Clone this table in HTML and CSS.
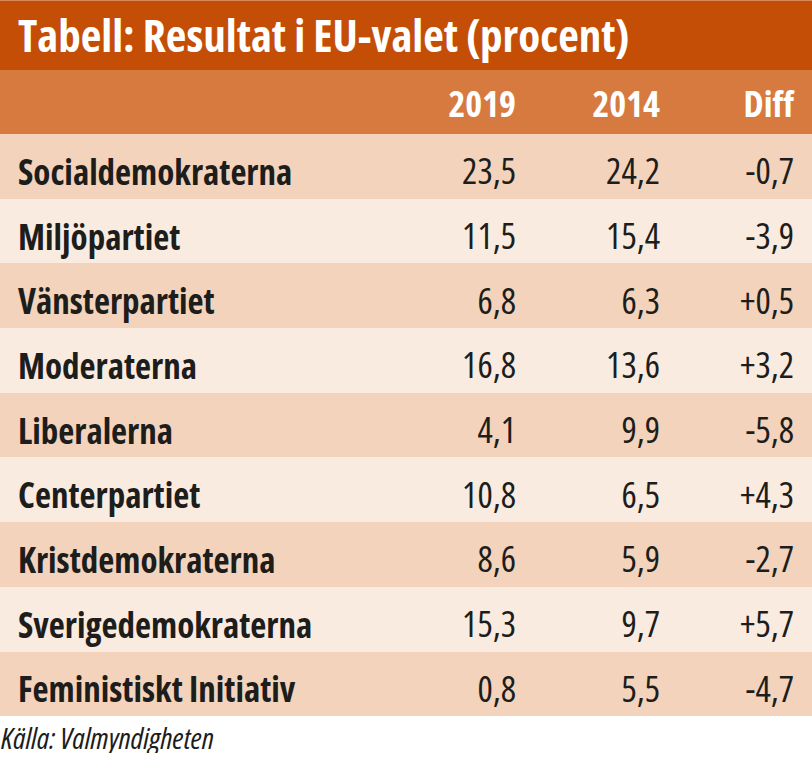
FILE: index.html
```html
<!DOCTYPE html>
<html lang="sv"><head><meta charset="utf-8"><title>Tabell: Resultat i EU-valet (procent)</title><link rel="stylesheet" href="styles.css"></head>
<body>
<div class="card">
  <h1 class="title">Tabell: Resultat i EU-valet (procent)</h1>
  <div class="row head">
    <span class="name"></span><span class="num">2019</span><span class="num">2014</span><span class="num">Diff</span>
  </div>
  <div class="row odd"><span class="name">Socialdemokraterna</span><span class="num">23,5</span><span class="num">24,2</span><span class="num">-0,7</span></div>
  <div class="row even"><span class="name">Miljöpartiet</span><span class="num">11,5</span><span class="num">15,4</span><span class="num">-3,9</span></div>
  <div class="row odd"><span class="name">Vänsterpartiet</span><span class="num">6,8</span><span class="num">6,3</span><span class="num">+0,5</span></div>
  <div class="row even"><span class="name">Moderaterna</span><span class="num">16,8</span><span class="num">13,6</span><span class="num">+3,2</span></div>
  <div class="row odd"><span class="name">Liberalerna</span><span class="num">4,1</span><span class="num">9,9</span><span class="num">-5,8</span></div>
  <div class="row even"><span class="name">Centerpartiet</span><span class="num">10,8</span><span class="num">6,5</span><span class="num">+4,3</span></div>
  <div class="row odd"><span class="name">Kristdemokraterna</span><span class="num">8,6</span><span class="num">5,9</span><span class="num">-2,7</span></div>
  <div class="row even"><span class="name">Sverigedemokraterna</span><span class="num">15,3</span><span class="num">9,7</span><span class="num">+5,7</span></div>
  <div class="row odd"><span class="name">Feministiskt Initiativ</span><span class="num">0,8</span><span class="num">5,5</span><span class="num">-4,7</span></div>
  <p class="source">Källa: Valmyndigheten</p>
</div>
</body></html>
```
FILE: styles.css
```css
html,body{margin:0;padding:0;background:#fff}
.card{width:812px;font-family:"Open Sans",sans-serif;font-stretch:75%;color:#1d1d1b}
.title{margin:0;height:70px;box-sizing:border-box;border-top:1px solid #d8875a;background:#c54e07;color:#fff;font-size:45px;font-weight:700;line-height:68px;padding-left:18px;white-space:nowrap}
.row{display:grid;grid-template-columns:1fr 130px 144px 134px;padding:10px 18px 0;height:64.7px;align-items:center;font-size:36px;line-height:1;box-sizing:border-box}
.head{height:64px;padding-top:4px;background:#d77a40;color:#fff;font-weight:700}
.odd{background:#f3d3bb}
.even{background:#faebe1}
.name{font-weight:700;white-space:nowrap;font-size:35px}
.num{text-align:right;font-weight:400}
.head .num{font-weight:700}
.source{margin:0;padding:7px 0 0 1px;font-size:30px;font-style:italic;font-weight:400;line-height:1}
```
